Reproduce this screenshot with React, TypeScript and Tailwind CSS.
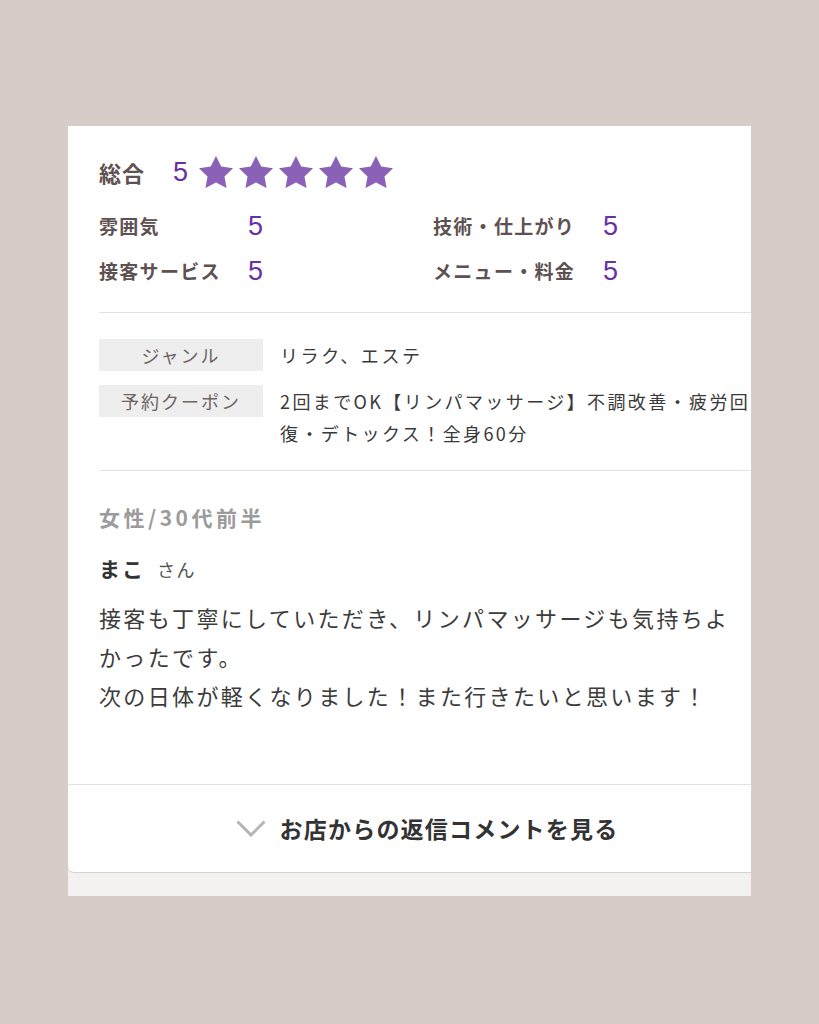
import React from "react";

const Star = () => (
  <svg width="34" height="32" viewBox="2 2 20 19.02" preserveAspectRatio="none">
    <polygon
      fill="#8b61b7"
      points="12,2 15.09,8.26 22,9.27 17,14.14 18.18,21.02 12,17.77 5.82,21.02 7,14.14 2,9.27 8.91,8.26"
    />
  </svg>
);

const Score = () => (
  <span className="font-['Liberation_Sans',Arial,sans-serif] text-[27px] leading-none text-[#6b2fa3]">5</span>
);

export default function App() {
  return (
    <div className="min-h-[1024px] bg-[#d7ccc8] pt-[126px] pl-[68px] font-['Noto_Sans_CJK_JP',sans-serif]">
      <div className="w-[683px] overflow-hidden bg-[#f3f2f1]">
        <div className="w-[718px] pb-[24px]">
          <div className="bg-white rounded-b-[6px] shadow-[0_1px_1px_rgba(0,0,0,0.14)]">
            {/* Ratings */}
            <div className="ml-[31px] pt-[29px] pb-[18px] border-b border-[#e2e2e2]">
              <div className="flex h-[34px] items-center">
                <span className="w-[74px] text-[22px] font-bold leading-none text-[#5e5151] tracking-[1px]">総合</span>
                <Score />
                <div className="ml-[11px] flex gap-[6px]">
                  <Star />
                  <Star />
                  <Star />
                  <Star />
                  <Star />
                </div>
              </div>
              <div className="mt-[15px] grid grid-cols-[334px_1fr]">
                <div className="flex h-[45px] items-center">
                  <span className="w-[149px] text-[19px] font-bold text-[#5e5151] tracking-[1.3px]">雰囲気</span>
                  <Score />
                </div>
                <div className="flex h-[45px] items-center">
                  <span className="w-[170px] text-[19px] font-bold text-[#5e5151] tracking-[1.3px]">技術・仕上がり</span>
                  <Score />
                </div>
                <div className="flex h-[45px] items-center">
                  <span className="w-[149px] text-[19px] font-bold text-[#5e5151] tracking-[1.3px]">接客サービス</span>
                  <Score />
                </div>
                <div className="flex h-[45px] items-center">
                  <span className="w-[170px] text-[19px] font-bold text-[#5e5151] tracking-[1.3px]">メニュー・料金</span>
                  <Score />
                </div>
              </div>
            </div>

            {/* Genre / coupon */}
            <div className="ml-[31px] pt-[26px] pb-[21px] border-b border-[#e2e2e2] text-[18px]">
              <div className="flex gap-[17px]">
                <div className="flex h-[32px] w-[164px] shrink-0 items-center justify-center bg-[#eeeeee] text-[#6f6363] tracking-[2px]">
                  ジャンル
                </div>
                <div className="leading-[32px] text-[#3a3a3a] tracking-[2.6px]">リラク、エステ</div>
              </div>
              <div className="mt-[14px] flex gap-[17px]">
                <div className="flex h-[32px] w-[164px] shrink-0 items-center justify-center bg-[#eeeeee] text-[#6f6363] tracking-[2px]">
                  予約クーポン
                </div>
                <div className="leading-[32px] text-[#3a3a3a] whitespace-nowrap tracking-[2.4px]">
                  2回までOK【リンパマッサージ】不調改善・疲労回
                  <br />
                  復・デトックス！全身60分
                </div>
              </div>
            </div>

            {/* Review */}
            <div className="pl-[31px] pt-[31px] pb-[69px] border-b border-[#e2e2e2]">
              <div className="h-[30px] leading-[30px] text-[21px] font-bold text-[#9b9b9b] tracking-[3.5px]">
                女性/30代前半
              </div>
              <div className="mt-[21px] h-[30px] leading-[30px] text-[#333333]">
                <span className="text-[21px] font-bold tracking-[2px]">まこ</span>
                <span className="ml-[12px] text-[18px] text-[#555555] tracking-[1.5px]">さん</span>
              </div>
              <div className="mt-[15px] text-[22px] leading-[39px] tracking-[2.35px] text-[#3c3c3c] whitespace-nowrap">
                接客も丁寧にしていただき、リンパマッサージも気持ちよ
                <br />
                かったです。
                <br />
                次の日体が軽くなりました！また行きたいと思います！
              </div>
            </div>

            {/* Button */}
            <div className="flex h-[87px] items-center justify-center gap-[14px]">
              <svg width="30" height="17" viewBox="0 0 30 17">
                <polyline points="1.5,1.5 15,15 28.5,1.5" fill="none" stroke="#b5b5b5" strokeWidth="3" />
              </svg>
              <span className="text-[23px] font-bold tracking-[1.2px] text-[#333333]">お店からの返信コメントを見る</span>
            </div>
          </div>
        </div>
      </div>
    </div>
  );
}
